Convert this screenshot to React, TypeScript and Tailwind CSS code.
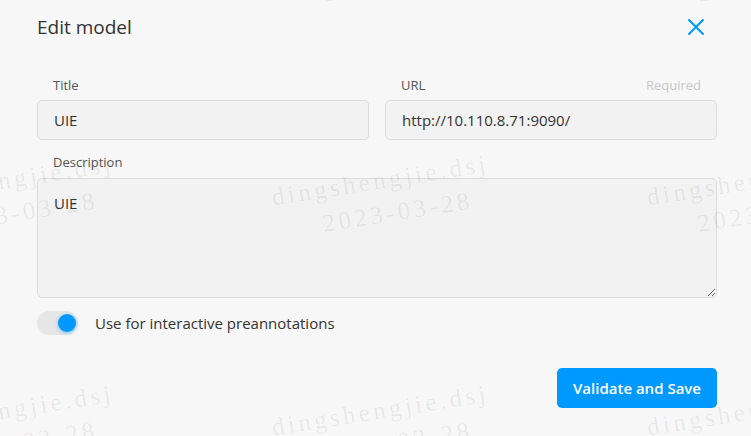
import { useState } from "react";

const FONT = { fontFamily: '"Open Sans", "Noto Sans", Arial, sans-serif' };

function Watermarks() {
  const tiles: { x: number; y: number }[] = [];
  for (let r = -1; r <= 1; r++) {
    for (let c = -1; c <= 1; c++) {
      tiles.push({ x: 280 + 375 * c, y: 180 + 230 * r });
    }
  }
  return (
    <div className="pointer-events-none absolute inset-0 z-10 overflow-hidden">
      {tiles.map((t, i) => (
        <div
          key={i}
          className="absolute origin-bottom-left -rotate-[9deg] whitespace-nowrap text-[25px] leading-[34px] tracking-[3.5px] text-black/[0.07]"
          style={{ left: t.x, top: t.y, fontFamily: '"Liberation Serif", "DejaVu Serif", serif' }}
        >
          <div>dingshengjie.dsj</div>
          <div className="pl-[46px]">2023-03-28</div>
        </div>
      ))}
    </div>
  );
}

export default function App() {
  const [on, setOn] = useState(true);

  return (
    <div
      className="relative h-[436px] w-[751px] overflow-hidden bg-[#f7f7f7] pl-[37px] pr-[34px] text-[#333]"
      style={FONT}
    >
      <Watermarks />

      <header className="mt-[13px] flex h-[28px] items-center justify-between">
        <h2 className="text-[19px] font-normal leading-[28px] text-[#333]">Edit model</h2>
        <button type="button" className="mr-[12px] text-[#0099ff]" aria-label="Close">
          <svg width="18" height="18" viewBox="0 0 18 18" fill="none">
            <path d="M2 2l14 14M16 2L2 16" stroke="currentColor" strokeWidth="2" strokeLinecap="round" />
          </svg>
        </button>
      </header>

      <div className="mt-[34px] grid grid-cols-2 gap-x-[16px]">
        <div>
          <div className="mb-[5px] pl-[16px] text-[13px] leading-[20px] text-[#555]">Title</div>
          <div className="flex h-[40px] items-center rounded-[5px] border border-[#dcdcdc] bg-[#f2f2f2] px-[16px] text-[15px]">
            UIE
          </div>
        </div>
        <div>
          <div className="mb-[5px] flex justify-between pl-[16px] pr-[16px] text-[13px] leading-[20px]">
            <span className="text-[#555]">URL</span>
            <span className="text-[#c8c8c8]">Required</span>
          </div>
          <div className="flex h-[40px] items-center rounded-[5px] border border-[#dcdcdc] bg-[#f2f2f2] px-[16px] text-[15px]">
            http://10.110.8.71:9090/
          </div>
        </div>
      </div>

      <div className="mt-[12px] mb-[6px] pl-[16px] text-[13px] leading-[20px] text-[#555]">Description</div>
      <textarea
        defaultValue="UIE"
        className="block h-[120px] w-full resize-y rounded-[5px] border border-[#dcdcdc] bg-[#f2f2f2] px-[16px] py-[12px] text-[15px] leading-[24px] text-[#333] outline-none"
        style={FONT}
      />

      <label className="mt-[13px] flex h-[24px] items-center gap-[17px]">
        <button
          type="button"
          onClick={() => setOn((p) => !p)}
          className="relative h-[24px] w-[41px] rounded-full bg-[#e6e6e6]"
          aria-label="toggle"
        >
          <span
            className={[
              "absolute top-[3px] h-[18px] w-[18px] rounded-full bg-[#0099ff] shadow-[0_1px_4px_rgba(0,153,255,0.45)]",
              on ? "right-[2px]" : "left-[2px]",
            ].join(" ")}
          />
        </button>
        <span className="text-[15px] leading-[24px] text-[#333]">Use for interactive preannotations</span>
      </label>

      <div className="mt-[33px] flex justify-end">
        <button
          type="button"
          className="h-[40px] w-[160px] rounded-[5px] bg-[#0099ff] text-[15px] font-semibold text-white"
        >
          Validate and Save
        </button>
      </div>
    </div>
  );
}
